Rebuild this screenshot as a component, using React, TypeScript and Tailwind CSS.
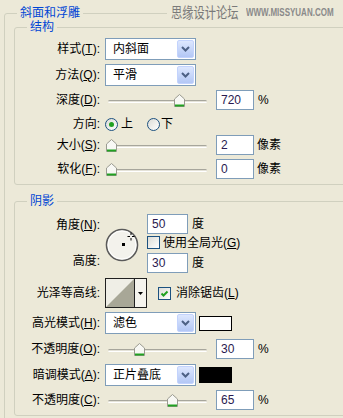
import type { ReactNode } from "react";

const GROUP = "border border-[#d0d0bf] rounded-[3px]";

function Label({ text, hotkey, className = "w-[85px]" }: { text: string; hotkey?: string; className?: string }) {
  return (
    <div className={`${className} text-right whitespace-nowrap`}>
      {text}
      {hotkey && (
        <>
          (<span className="underline underline-offset-1">{hotkey}</span>)
        </>
      )}
      :
    </div>
  );
}

function Combo({ value }: { value: string }) {
  return (
    <div className="ml-[5px] w-[91px] h-[22px] border border-[#7f9db9] bg-white flex items-center">
      <span className="flex-1 pl-[7px]">{value}</span>
      <div className="w-[17px] h-[18px] mr-[1px] rounded-[2px] border border-[#c3d3fd] bg-linear-to-b from-[#dde7fe] to-[#b3c7f5] flex items-center justify-center">
        <svg width="9" height="6" viewBox="0 0 9 6">
          <path d="M1 1 L4.5 4.5 L8 1" stroke="#4d6185" strokeWidth="2" fill="none" />
        </svg>
      </div>
    </div>
  );
}

function NumBox({ value, className = "ml-[6px] w-[38px]" }: { value: string; className?: string }) {
  return (
    <div className={`${className} h-[20px] border border-[#7f9db9] bg-white pl-[4px] flex items-center text-[#2a1a50]`}>
      {value}
    </div>
  );
}

function Slider({ value }: { value: number }) {
  // value 0..1, thumb centre runs from x=6 to x=101 inside the 105px control
  return (
    <div className="relative ml-[5px] w-[105px] h-[20px]">
      <div className="absolute left-[3px] right-[3px] top-[10px] h-[3px] rounded-full border-t border-[#a7a69c] border-b border-b-white bg-[#e4e2d8]" />
      <svg
        className="absolute top-[4px]"
        style={{ left: 0.5 + value * 95 }}
        width="11"
        height="13"
        viewBox="0 0 11 13"
      >
        <path d="M0.5 5 L5.5 0.5 L10.5 5 V12.5 H0.5 Z" fill="#f8f8f4" stroke="#9a9a90" />
        <path d="M1 11.5 H10" stroke="#21a121" strokeWidth="2" />
      </svg>
    </div>
  );
}

function Radio({ checked }: { checked?: boolean }) {
  return (
    <span className="w-[13px] h-[13px] rounded-full border border-[#1c5180] bg-linear-to-br from-[#dcdcd6] to-white flex items-center justify-center">
      {checked && <span className="w-[5px] h-[5px] rounded-full bg-[#21a121]" />}
    </span>
  );
}

function Check({ checked }: { checked?: boolean }) {
  return (
    <span className="w-[13px] h-[13px] border border-[#1c5180] bg-linear-to-br from-[#dcdcd6] to-white flex items-center justify-center">
      {checked && (
        <svg width="9" height="9" viewBox="0 0 9 9">
          <path d="M1.5 4.5 L3.5 6.5 L7.5 2.5" stroke="#21a121" strokeWidth="2" fill="none" />
        </svg>
      )}
    </span>
  );
}

function Row({ className, children }: { className: string; children: ReactNode }) {
  return <div className={`flex items-center ${className}`}>{children}</div>;
}

export default function App() {
  return (
    <div className="relative w-[343px] h-[418px] overflow-hidden bg-[#ece9d8] pt-[6px] pl-[4px] text-[12px] text-black font-['Liberation_Sans','Noto_Sans_CJK_SC',sans-serif]">
      {/* watermark */}
      <div className="absolute top-[3px] left-[167px] right-0 h-[19px] bg-[#ece9d8] flex items-center pl-[4px]">
        <span className="w-[75px] inline-block">
          <span className="inline-block origin-left scale-x-75 text-[15px] leading-[19px] text-[#7a7a7a] whitespace-nowrap">
            思缘设计论坛
          </span>
        </span>
        <span className="inline-block origin-left scale-x-[0.8] text-[10px] font-bold text-[#8a8a8a] whitespace-nowrap">
          WWW.MISSYUAN.COM
        </span>
      </div>

      <fieldset className={`w-[350px] pb-[20px] ${GROUP}`}>
        <legend className="ml-[12px] px-[3px] leading-[15px] text-[#0046d5]">斜面和浮雕</legend>

        {/* 结构 */}
        <fieldset className={`ml-[9px] mt-[-1px] pb-[5px] ${GROUP}`}>
          <legend className="ml-[12px] px-[3px] leading-[15px] text-[#0046d5]">结构</legend>
          <Row className="mt-[3px] h-[22px]">
            <Label text="样式" hotkey="T" />
            <Combo value="内斜面" />
          </Row>
          <Row className="mt-[4px] h-[22px]">
            <Label text="方法" hotkey="Q" />
            <Combo value="平滑" />
          </Row>
          <Row className="mt-[4px] h-[20px]">
            <Label text="深度" hotkey="D" />
            <Slider value={0.72} />
            <NumBox value="720" />
            <span className="ml-[4px]">%</span>
          </Row>
          <Row className="mt-[6px] h-[16px]">
            <Label text="方向" />
            <span className="ml-[5px]">
              <Radio checked />
            </span>
            <span className="ml-[3px]">上</span>
            <span className="ml-[14px]">
              <Radio />
            </span>
            <span className="ml-[1px]">下</span>
          </Row>
          <Row className="mt-[3px] h-[20px]">
            <Label text="大小" hotkey="S" />
            <Slider value={0.01} />
            <NumBox value="2" />
            <span className="ml-[3px]">像素</span>
          </Row>
          <Row className="mt-[4px] h-[20px]">
            <Label text="软化" hotkey="F" />
            <Slider value={0} />
            <NumBox value="0" />
            <span className="ml-[3px]">像素</span>
          </Row>
        </fieldset>

        {/* 阴影 */}
        <fieldset className={`ml-[9px] mt-[9px] pb-[5px] ${GROUP}`}>
          <legend className="ml-[12px] px-[3px] leading-[15px] text-[#0046d5]">阴影</legend>

          <div className="mt-[5px] flex">
            <div className="w-[85px] flex flex-col pt-[3px]">
              <div className="h-[16px] flex items-center justify-end">
                <Label text="角度" hotkey="N" className="" />
              </div>
              <div className="mt-[20px] h-[16px] flex items-center justify-end">
                <Label text="高度" className="" />
              </div>
            </div>
            <svg className="ml-[5px] mt-[14px]" width="34" height="34" viewBox="0 0 34 34">
              <circle cx="17" cy="17" r="15.5" fill="#f3f2ec" stroke="#5a5a5a" strokeWidth="1.6" />
              <circle cx="17" cy="17" r="14" fill="none" stroke="#ffffff" strokeWidth="1" />
              <rect x="17" y="15" width="3" height="3" fill="#000" />
              <path d="M26 4.5 V7 M26 10 V12.5 M22.5 8.5 H25 M27 8.5 H29.5" stroke="#000" strokeWidth="1" />
            </svg>
            <div className="ml-[8px] flex flex-col">
              <div className="flex items-center h-[20px]">
                <NumBox value="50" className="w-[41px]" />
                <span className="ml-[4px]">度</span>
              </div>
              <div className="mt-[2px] h-[13px] flex items-center">
                <Check />
                <span className="ml-[3px] whitespace-nowrap">
                  使用全局光(<span className="underline underline-offset-1">G</span>)
                </span>
              </div>
              <div className="mt-[4px] flex items-center h-[20px]">
                <NumBox value="30" className="w-[41px]" />
                <span className="ml-[4px]">度</span>
              </div>
            </div>
          </div>

          <Row className="mt-[5px] h-[30px]">
            <Label text="光泽等高线" />
            <div className="ml-[5px] w-[42px] h-[30px] border border-[#202020] flex">
              <svg width="28" height="28" viewBox="0 0 28 28">
                <rect width="28" height="28" fill="#efeee6" />
                <polygon points="0,28 28,0 28,28" fill="#a8a797" />
              </svg>
              <div className="w-[12px] border-l border-[#202020] bg-[#f5f4ee] flex items-center justify-center">
                <svg width="5" height="3" viewBox="0 0 5 3">
                  <polygon points="0,0 5,0 2.5,3" fill="#000" />
                </svg>
              </div>
            </div>
            <span className="ml-[11px]">
              <Check checked />
            </span>
            <span className="ml-[5px] whitespace-nowrap">
              消除锯齿(<span className="underline underline-offset-1">L</span>)
            </span>
          </Row>

          <Row className="mt-[4px] h-[22px]">
            <Label text="高光模式" hotkey="H" />
            <Combo value="滤色" />
            <div className="ml-[3px] w-[33px] h-[15px] border border-black bg-white" />
          </Row>
          <Row className="mt-[5px] h-[20px]">
            <Label text="不透明度" hotkey="O" />
            <Slider value={0.3} />
            <NumBox value="30" />
            <span className="ml-[4px]">%</span>
          </Row>
          <Row className="mt-[5px] h-[22px]">
            <Label text="暗调模式" hotkey="A" />
            <Combo value="正片叠底" />
            <div className="ml-[3px] w-[33px] h-[16px] border border-black bg-black" />
          </Row>
          <Row className="mt-[4px] h-[20px]">
            <Label text="不透明度" hotkey="C" />
            <Slider value={0.65} />
            <NumBox value="65" />
            <span className="ml-[4px]">%</span>
          </Row>
        </fieldset>
      </fieldset>
    </div>
  );
}
